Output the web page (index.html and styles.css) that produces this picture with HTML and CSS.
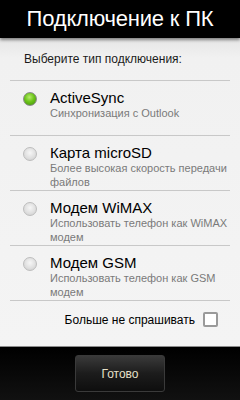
FILE: index.html
```html
<!DOCTYPE html>
<html lang="ru">

<head>
    <meta charset="UTF-8">
    <meta name="viewport" content="width=device-width, initial-scale=1.0">
    <title>Подключение к ПК</title>
    <link rel="stylesheet" href="styles.css">
</head>

<body>
    <div class="screen">
        <header class="titleBar">
            <h1>Подключение к ПК</h1>
        </header>

        <main class="content">
            <p class="prompt">Выберите тип подключения:</p>

            <ul class="options">
                <li class="option">
                    <span class="radio checked"></span>
                    <div class="optionText">
                        <div class="optionTitle">ActiveSync</div>
                        <div class="optionDesc">Синхронизация с Outlook</div>
                    </div>
                </li>
                <li class="option">
                    <span class="radio"></span>
                    <div class="optionText">
                        <div class="optionTitle">Карта microSD</div>
                        <div class="optionDesc">Более высокая скорость передачи файлов</div>
                    </div>
                </li>
                <li class="option">
                    <span class="radio"></span>
                    <div class="optionText">
                        <div class="optionTitle">Модем WiMAX</div>
                        <div class="optionDesc">Использовать телефон как WiMAX модем</div>
                    </div>
                </li>
                <li class="option">
                    <span class="radio"></span>
                    <div class="optionText">
                        <div class="optionTitle">Модем GSM</div>
                        <div class="optionDesc">Использовать телефон как GSM модем</div>
                    </div>
                </li>
            </ul>

            <label class="dontAsk">
                <span>Больше не спрашивать</span>
                <span class="checkbox"></span>
            </label>
        </main>

        <footer class="bottomBar">
            <button type="button" class="doneButton">Готово</button>
        </footer>
    </div>
</body>

</html>
```

FILE: styles.css
```css
html,
body {
    margin: 0;
    padding: 0;
}

body {
    font-family: "Liberation Sans", Arial, sans-serif;
    background-color: #000000;
}

.screen {
    width: 240px;
    height: 400px;
    display: flex;
    flex-direction: column;
    background-color: #ededed;
}

.titleBar {
    height: 38px;
    background-color: #000000;
    box-shadow: 0 2px 3px rgba(0, 0, 0, 0.45);
    display: flex;
    align-items: center;
    justify-content: center;
    position: relative;
    z-index: 1;
}

.titleBar h1 {
    margin: 0;
    font-weight: normal;
    font-size: 22px;
    color: #ffffff;
    letter-spacing: -0.2px;
}

.content {
    flex: 1;
    padding: 0 10px;
    background: linear-gradient(#e6e6e6, #f1f1f1 20px, #f4f4f4);
}

.prompt {
    margin: 0;
    padding: 14px 0 0 14px;
    height: 28px;
    font-size: 12px;
    color: #1a1a1a;
    border-bottom: 1px solid #c8c8c8;
}

.options {
    list-style: none;
    margin: 0;
    padding: 0;
}

.option {
    display: flex;
    align-items: flex-start;
    min-height: 45px;
    padding: 9px 0 0 13px;
    border-bottom: 1px solid #c8c8c8;
}

.radio {
    flex: none;
    width: 12px;
    height: 12px;
    margin-top: 2px;
    margin-right: 13px;
    border-radius: 50%;
    border: 1px solid #bdbdbd;
    background: radial-gradient(circle at 50% 40%, #f6f6f6 0, #e0e0e0 55%, #cbcbcb 100%);
}

.radio.checked {
    border-color: #8a8a8a;
    background: radial-gradient(circle at 45% 35%, #b6ec6a 0, #6cc41a 45%, #3f8d0a 100%);
}

.optionText {
    flex: 1;
}

.optionTitle {
    font-size: 15px;
    line-height: 16px;
    color: #000000;
}

.optionDesc {
    font-size: 11px;
    line-height: 14px;
    color: #7a7a7a;
}

.dontAsk {
    display: flex;
    justify-content: flex-end;
    align-items: center;
    gap: 8px;
    padding: 11px 12px 0 0;
    font-size: 12px;
    color: #000000;
}

.checkbox {
    width: 11px;
    height: 11px;
    border: 2px solid #9a9a9a;
    border-radius: 2px;
    background-color: #ffffff;
}

.bottomBar {
    height: 54px;
    box-sizing: border-box;
    border-top: 1px solid #8c8c8c;
    background: linear-gradient(#000000, #111111);
    display: flex;
    justify-content: center;
    align-items: flex-start;
    padding-top: 8px;
}

.doneButton {
    width: 90px;
    height: 37px;
    border: 1px solid #3a3a3a;
    border-radius: 3px;
    background: linear-gradient(#3a3a3a, #1c1c1c 50%, #0e0e0e);
    color: #e6e0c8;
    font-family: "Liberation Sans", Arial, sans-serif;
    font-size: 12px;
    padding: 0;
}
```
